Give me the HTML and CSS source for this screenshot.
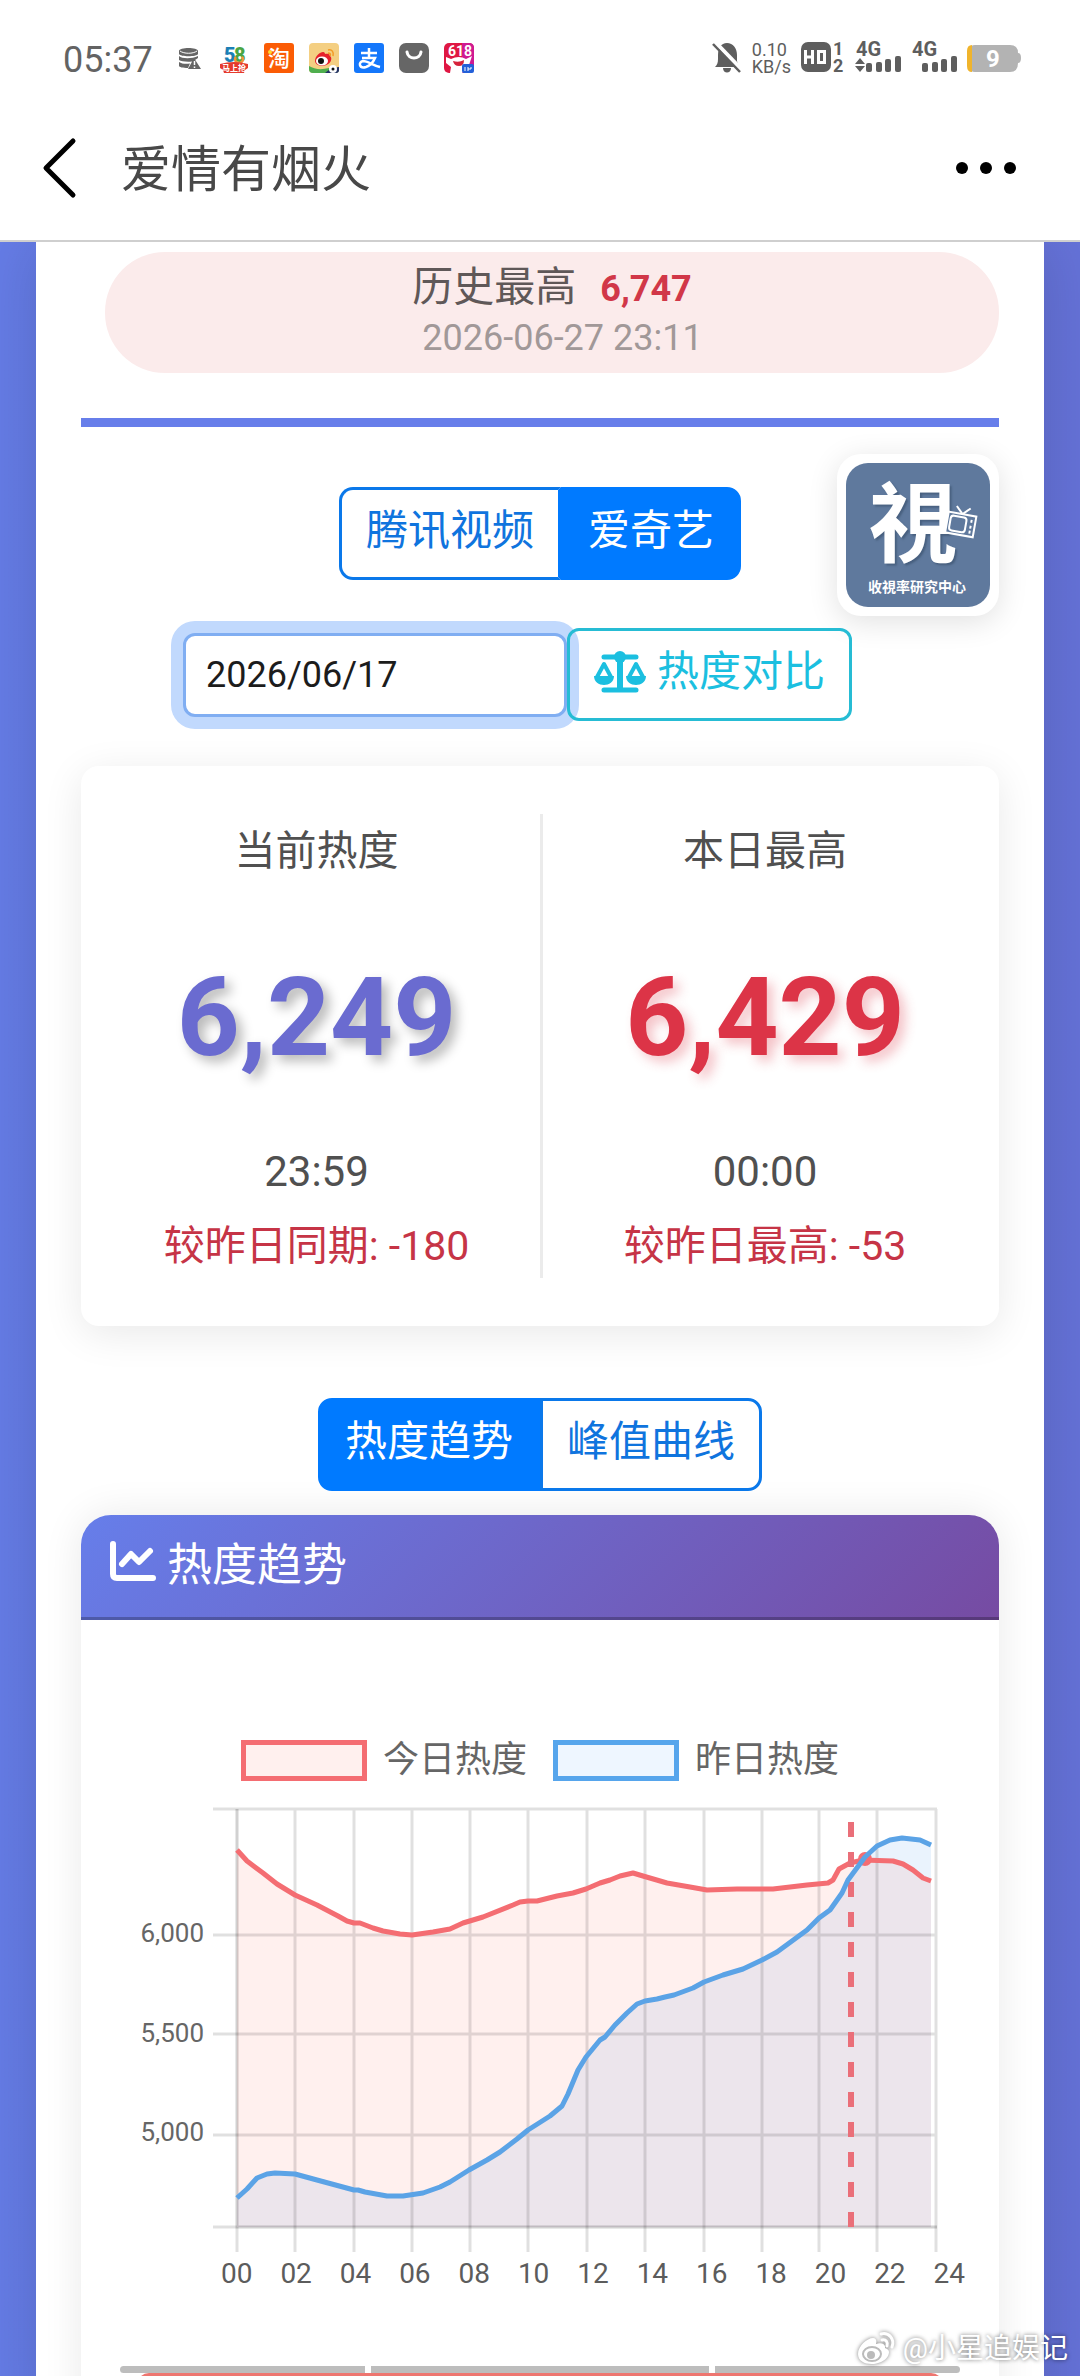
FILE: index.html
```html
<!DOCTYPE html>
<html lang="zh-CN">
<head>
<meta charset="utf-8">
<meta name="viewport" content="width=device-width, initial-scale=1">
<title>爱情有烟火</title>
<link rel="stylesheet" href="styles.css">
</head>
<body>
<div class="app">
  <div class="status">
    <time class="status-time">05:37</time>
    <div class="status-apps">
      <svg width="30" height="30" viewBox="0 0 30 30" aria-hidden="true">
        <path fill="#666" d="M5 8c0-4 19-4 19 0v3c-1 3-18 3-19 0zM5 13c3 3 13 3 19 0v2l-3 2-3 1.500c-5 .5-11 0-13-1.500zM5 19c3 2 7 2 11 1.500l-2 4.500c-5 0-9-1-9-2zM20 15l7 11H14z"/>
        <path d="M6 8c4 3 13 3 17 0" fill="none" stroke="#fff"/>
        <path d="M20.500 18v4m0 1.500v1.500" stroke="#fff" stroke-width="1.500"/>
      </svg>
      <svg width="30" height="30" viewBox="0 0 30 30" aria-hidden="true">
        <text x="5" y="19" class="t58" fill="#1b7fb5">5</text><text x="15" y="19" class="t58" fill="#4aa544">8</text>
        <path d="M17 14a4 3.500 0 1 0 6 0" fill="none" stroke="#f0953a" stroke-width="2.500"/>
        <path d="M1 21q14-4 28 0v4l-3 2-1 3H5l-1-3-3-2z" fill="#e53a2d"/>
        <text x="3" y="28" class="t8" fill="#fff">马上抢</text>
      </svg>
      <svg width="30" height="30" viewBox="0 0 30 30" aria-hidden="true">
        <rect width="30" height="30" rx="3" fill="#fb5c05"/><circle cx="6" cy="9" r="2" fill="#ffd92e"/>
        <text x="4" y="23" class="t22" fill="#fff">淘</text>
      </svg>
      <svg width="30" height="30" viewBox="0 0 30 30" aria-hidden="true">
        <rect width="30" height="30" rx="4" fill="#f4cf82"/>
        <path d="M0 23q8 5 20 2l10 1q0 4-4 4H4q-4 0-4-4z" fill="#4fae4e"/><path d="M16 30q6-6 14-6v3q0 3-3 3z" fill="#243266"/>
        <path d="M6 18c0-5 5-9 8-9 2 0 2 2 2 2s5-1 5 2c3 2 1 9-7 10-4 0-8-2-8-5z" fill="#e6202b"/>
        <ellipse cx="13" cy="18" rx="6" ry="4.500" fill="#fff"/><circle cx="12" cy="18" r="3" fill="#111"/>
        <path d="M19 7c4-1 6 2 5 6M19 10c2 0 3 1 2 3" fill="none" stroke="#f39a24" stroke-width="1.500"/>
        <circle cx="24" cy="26" r="4" fill="#fff"/><circle cx="24" cy="26" r="1.500" fill="#111"/>
      </svg>
      <svg width="30" height="30" viewBox="0 0 30 30" aria-hidden="true">
        <rect width="30" height="30" rx="3" fill="#1477fb"/>
        <path d="M7 10h16M15 5v10M8 15h13q-3 7-9 9c-7 2-8-5-3-6 5 0 9 4 17 6" fill="none" stroke="#fff" stroke-width="2.500"/>
      </svg>
      <svg width="30" height="30" viewBox="0 0 30 30" aria-hidden="true">
        <rect width="30" height="30" rx="7" fill="#666"/>
        <path d="M8 9c1 8 13 8 14 0" fill="none" stroke="#fff" stroke-width="3" stroke-linecap="round"/>
      </svg>
      <svg width="30" height="30" viewBox="0 0 30 30" aria-hidden="true">
        <rect width="30" height="30" rx="5" fill="#df1743"/><path d="M18 0h7q5 0 5 5v20q0 5-5 5h-7z" fill="#cf1a92"/>
        <path d="M2 14l5 2q8-4 15 0l6-3-3 9-7 8H6l1-6-5-4z" fill="#fff"/>
        <path d="M9 18q6 2 11-1 0 6-5 6t-6-5z" fill="#d6233b"/>
        <text x="4" y="13" class="t14" fill="#fff">618</text>
        <rect x="18" y="21" width="12" height="9" rx="2" fill="#2360d9"/><path d="M21 24v4m3-4v4m0-2h3v-2" stroke="#fff" fill="none"/>
      </svg>
    </div>
    <div class="status-net">
      <svg width="30" height="32" viewBox="0 0 30 32" aria-hidden="true">
        <path d="M3 26c2-2 3-4 3-8v-4C6 7 9 2 15 2s10 5 10 12v6l2 6zM11 27h8c0 6-8 6-8 0z" fill="#5e5e5e"/>
        <path d="M3 1l27 28" stroke="#fff" stroke-width="4"/><path d="M1 3l27 28" stroke="#5e5e5e" stroke-width="2.500"/>
      </svg>
      <div class="speed"><span>0.10</span><span>KB/s</span></div>
      <svg width="44" height="32" viewBox="0 0 44 32" aria-hidden="true">
        <rect y="1" width="30" height="30" rx="7" fill="#5e5e5e"/>
        <path d="M4.500 9v14M11.500 9v14M4.500 16h7M17.500 10.500h6v11h-6z" fill="none" stroke="#fff" stroke-width="3"/>
        <text x="32" y="14" class="t18" fill="#5e5e5e">1</text><text x="32" y="31" class="t18" fill="#5e5e5e">2</text>
      </svg>
      <svg width="46" height="32" viewBox="0 0 46 32" aria-hidden="true">
        <text x="1" y="15" class="t20" fill="#5e5e5e">4G</text>
        <path d="M0 23l5-6 5 6zM0 25l5 6 5-6z" fill="#5e5e5e"/>
        <g fill="#5e5e5e"><rect x="11" y="22" width="6" height="9" rx="2"/><rect x="21" y="21" width="6" height="10" rx="2"/><rect x="30" y="18" width="6" height="13" rx="2"/><rect x="40" y="15" width="6" height="16" rx="2"/></g>
      </svg>
      <svg width="46" height="32" viewBox="0 0 46 32" aria-hidden="true">
        <text x="1" y="15" class="t20" fill="#5e5e5e">4G</text>
        <g fill="#5e5e5e"><rect x="11" y="22" width="6" height="9" rx="2"/><rect x="21" y="21" width="6" height="10" rx="2"/><rect x="30" y="18" width="6" height="13" rx="2"/><rect x="40" y="15" width="6" height="16" rx="2"/></g>
      </svg>
      <svg width="54" height="32" viewBox="0 0 54 32" aria-hidden="true">
        <path d="M8 4h35q8 0 8 8 3 0 3 5t-3 5q0 9-8 9H8q-5 0-5-5V9q0-5 5-5z" fill="#b3b3b3"/>
        <path d="M5 4v27q-5 0-5-6V10q0-6 5-6z" fill="#f0b42c"/>
        <text x="19" y="26" class="t24" fill="#fff">9</text>
      </svg>
    </div>
  </div>

  <header class="bar">
    <button class="icon-btn" aria-label="返回">
      <svg width="34" height="64" viewBox="0 0 34 64"><path d="M31 5L4 32l27 27" fill="none" stroke="#000" stroke-width="5" stroke-linecap="round" stroke-linejoin="round"/></svg>
    </button>
    <h1 class="bar-title">爱情有烟火</h1>
    <button class="icon-btn" aria-label="更多">
      <svg width="60" height="12" viewBox="0 0 60 12"><circle cx="6" cy="6" r="6"/><circle cx="30" cy="6" r="6"/><circle cx="54" cy="6" r="6"/></svg>
    </button>
  </header>

  <main class="scroll">
    <div class="panel">
      <section class="record">
        <p class="record-line">历史最高<strong class="record-value">6,747</strong></p>
        <p class="record-date">2026-06-27 23:11</p>
      </section>
      <hr class="rule">

      <section class="platforms">
        <div class="group">
          <button class="tab">腾讯视频</button>
          <button class="tab tab-on">爱奇艺</button>
        </div>
        <a class="logo" href="#" aria-label="收視率研究中心">
          <svg width="144" height="144" viewBox="0 0 144 144">
            <rect width="144" height="144" rx="22" fill="#5f799d"/>
            <text x="23" y="92" class="logo-glyph">視</text>
            <g transform="rotate(10 115 60)" fill="#5f799d" stroke="#fff" stroke-width="2">
              <path d="M108 44l7 7 7-7" fill="none"/>
              <rect x="101" y="51" width="28" height="21"/>
              <rect x="104" y="54" width="16" height="15" rx="3"/>
              <path d="M125 55v3m0 3v3m0 2v3"/>
            </g>
            <text x="22" y="129" class="logo-name">收視率研究中心</text>
          </svg>
        </a>
      </section>

      <form class="picker">
        <input class="date" type="text" value="2026/06/17" aria-label="日期">
        <button class="compare" type="button">
          <svg width="52" height="42" viewBox="0 0 52 42" aria-hidden="true">
            <g fill="none" stroke="#1bbfe0" stroke-linecap="round" stroke-linejoin="round">
              <path d="M10 6h32M10 39h32" stroke-width="5"/><path d="M26 6v32" stroke-width="6" stroke-linecap="butt"/>
              <path d="M3 26l7-13 7 13M35 26l7-13 7 13" stroke-width="4"/>
            </g>
            <circle cx="26" cy="6" r="6" fill="#1bbfe0"/>
            <path d="M0 25h20c0 12-20 12-20 0zM32 25h20c0 12-20 12-20 0z" fill="#1bbfe0"/>
          </svg>
          热度对比
        </button>
      </form>

      <section class="stats">
        <div class="stat">
          <h2 class="stat-label">当前热度</h2>
          <p class="stat-num stat-now">6,249</p>
          <p class="stat-time">23:59</p>
          <p class="stat-diff">较昨日同期: -180</p>
        </div>
        <div class="stat">
          <h2 class="stat-label">本日最高</h2>
          <p class="stat-num stat-max">6,429</p>
          <p class="stat-time">00:00</p>
          <p class="stat-diff">较昨日最高: -53</p>
        </div>
      </section>

      <div class="group group-chart">
        <button class="tab tab-on">热度趋势</button>
        <button class="tab">峰值曲线</button>
      </div>

      <section class="trend">
        <h2 class="trend-head">
          <svg width="46" height="40" viewBox="0 0 46 40" aria-hidden="true">
            <path d="M3 3v30q0 4 4 4h36" fill="none" stroke="#fff" stroke-width="6" stroke-linecap="round"/>
            <path d="M12 23l9-10 8 8 11-11" fill="none" stroke="#fff" stroke-width="6" stroke-linecap="round" stroke-linejoin="round"/>
          </svg>
          热度趋势
        </h2>
        <div class="trend-body">
          <ul class="legend">
            <li class="legend-item"><span class="swatch swatch-today"></span>今日热度</li>
            <li class="legend-item"><span class="swatch swatch-yesterday"></span>昨日热度</li>
          </ul>
          <svg class="chart" viewBox="0 0 840 452" role="img" aria-label="热度趋势">
            <path class="area-blue" d="M117 398L127 389 137 378 147 374 155 373 175 374 197 380 234 390 238 390 245 392 267 396 283 396 303 393 320 387 330 382 349 370 367 360 380 352 397 339 408 330 430 316 442 306 448 294 458 270 466 257 480 240 485 237 495 225 507 213 517 204 525 201 537 199 545 197 554 195 573 188 584 182 603 175 623 169 642 160 657 152 687 130 699 118 710 110 722 93 728 80 745 57 757 46 770 40 782 38 800 40 811 45V427H117z"/>
            <path class="area-red" d="M117 50L127 61 143 73 157 84 175 95 197 105 218 116 227 121 234 123 240 123 253 128 263 131 280 134 292 135 313 132 330 129 343 123 363 117 393 105 400 102 408 101 417 101 437 96 453 93 466 89 480 83 490 80 500 76 513 73 523 76 547 83 570 87 587 90 617 89 653 89 687 85 708 83 713 80 719 69 730 63 743 60 773 61 783 64 793 70 803 78 811 81V427H117z"/>
            <path class="grid" d="M93 9H817M93 135H817M93 234H817M93 335H817M93 427H117M175 9V452M234 9V452M292 9V452M350 9V452M408 9V452M467 9V452M525 9V452M584 9V452M642 9V452M699 9V452M757 9V452M816 9V452M117 427V452"/>
            <path class="axis" d="M117 9V427H817"/>
            <path class="line line-red" d="M117 50L127 61 143 73 157 84 175 95 197 105 218 116 227 121 234 123 240 123 253 128 263 131 280 134 292 135 313 132 330 129 343 123 363 117 393 105 400 102 408 101 417 101 437 96 453 93 466 89 480 83 490 80 500 76 513 73 523 76 547 83 570 87 587 90 617 89 653 89 687 85 708 83 713 80 719 69 730 63 743 60 773 61 783 64 793 70 803 78 811 81"/>
            <circle cx="745" cy="59" r="7" fill="#f46d72"/>
            <path class="marker" d="M731 22V427"/>
            <path class="line line-blue" d="M117 398L127 389 137 378 147 374 155 373 175 374 197 380 234 390 238 390 245 392 267 396 283 396 303 393 320 387 330 382 349 370 367 360 380 352 397 339 408 330 430 316 442 306 448 294 458 270 466 257 480 240 485 237 495 225 507 213 517 204 525 201 537 199 545 197 554 195 573 188 584 182 603 175 623 169 642 160 657 152 687 130 699 118 710 110 722 93 728 80 745 57 757 46 770 40 782 38 800 40 811 45"/>
            <g class="ticks"><text x="84" y="142">6,000</text><text x="84" y="242">5,500</text><text x="84" y="341">5,000</text></g>
          </svg>
          <div class="hours">
            <span>00</span><span>02</span><span>04</span><span>06</span><span>08</span><span>10</span><span>12</span><span>14</span><span>16</span><span>18</span><span>20</span><span>22</span><span>24</span>
          </div>
          <div class="segments"><span class="seg"></span><span class="seg seg-mid"></span><span class="seg"></span></div>
          <div class="banner"></div>
        </div>
      </section>
    </div>
  </main>

  <div class="watermark">
    <svg width="40" height="34" viewBox="0 0 40 34" aria-hidden="true">
      <path d="M2 22C2 14 11 6 17 6c3 0 4 3 3 6 5-2 10 0 9 4 4 1 5 4 3 8-6 11-30 11-30-2z" fill="#fff"/>
      <ellipse cx="16" cy="22" rx="9" ry="7" fill="none" stroke="#bbb" stroke-width="2"/><circle cx="15" cy="23" r="4" fill="#bbb"/>
      <path d="M25 2c8-2 14 5 11 13M26 8c4-1 6 2 5 6" fill="none" stroke="#fff" stroke-width="3" stroke-linecap="round"/>
    </svg>
    <span>@小星追娱记</span>
  </div>
</div>
</body>
</html>
```
FILE: styles.css
```css
* { box-sizing: border-box; }

body, h1, h2, p, ul { margin: 0; padding: 0; }

body {
  font-family: Roboto, "Noto Sans CJK SC", sans-serif;
  color: #505050;
  background: #fff;
}

button, input { font: inherit; margin: 0; }
svg { display: block; flex: none; overflow: visible; }

.app {
  position: relative;
  display: flex;
  flex-direction: column;
  height: 100vh;
  overflow: hidden;
}

/* Status bar */
.status {
  display: flex;
  align-items: center;
  height: 116px;
  padding: 0 59px 0 63px;
}
.status-time { font-size: 36px; color: #636363; margin-right: 21px; line-height: 42px; padding-top: 4px; }
.status-apps { display: flex; gap: 15px; }
.status-net { display: flex; gap: 10px; margin-left: auto; }
.speed { display: flex; flex-direction: column; font-size: 18px; line-height: 17px; color: #5e5e5e; }
.t8 { font-size: 8px; font-weight: 700; }
.t14 { font-size: 14px; font-weight: 700; }
.t18 { font-size: 18px; font-weight: 700; }
.t20 { font-size: 20px; font-weight: 700; }
.t22 { font-size: 22px; font-weight: 500; }
.t24 { font-size: 24px; font-weight: 700; }
.t58 { font-size: 20px; font-weight: 900; }

/* Title bar */
.bar {
  display: flex;
  align-items: center;
  height: 126px;
  padding: 0 64px 20px 42px;
  border-bottom: 2px solid #cfcfcf;
}
.icon-btn { display: flex; padding: 0; border: 0; background: none; }
.bar-title { flex: 1; margin-left: 45px; padding-top: 4px; font-size: 50px; line-height: 60px; font-weight: 400; color: #484848; }

/* Page */
.scroll {
  flex: 1;
  min-height: 0;
  overflow: hidden;
  padding: 0 36px;
  background: linear-gradient(90deg, #657ce6, #6572d8);
}
.panel {
  min-height: 100%;
  padding: 10px 45px 0;
  background: #fff;
  box-shadow: 0 0 60px rgba(0, 0, 0, 0.15);
}

.record {
  margin-left: 24px;
  padding: 10px 0 9px;
  border-radius: 60px;
  background: #fbebeb;
  text-align: center;
}
.record-line {
  display: flex;
  align-items: baseline;
  justify-content: center;
  gap: 24px;
  height: 51px;
  font-size: 41px;
  line-height: 51px;
  color: #5f5858;
}
.record-value { font-size: 36px; font-weight: 700; color: #d13748; }
.record-date { padding-left: 21px; font-size: 36px; line-height: 51px; color: #a19898; }

.rule { height: 9px; margin: 45px 0 60px; border: 0; background: #677eea; }

.platforms { position: relative; }
.group { display: flex; justify-content: center; }
.tab {
  height: 93px;
  padding: 0 24px 6px;
  border: 3px solid #0a78ea;
  background: #fff;
  color: #0f74de;
  font-size: 42px;
  line-height: 60px;
}
.tab:first-child { border-radius: 14px 0 0 14px; }
.tab:last-child { border-radius: 0 14px 14px 0; }
.tab-on { background: #007aff; border-color: #007aff; color: #fff; }
.tab:not(.tab-on):first-child { border-right-color: #007aff; }

.logo {
  position: absolute;
  top: -33px;
  right: 0;
  padding: 9px;
  border-radius: 24px;
  background: #fff;
  box-shadow: 0 6px 30px rgba(0, 0, 0, 0.12);
}
.logo-glyph {
  font: 700 88px "Noto Sans CJK TC", sans-serif;
  fill: #fff;
  text-shadow: 2px 2px 2px #48607f;
}
.logo-name { font: 700 14px "Noto Sans CJK TC", sans-serif; fill: #fff; }

.picker {
  display: flex;
  align-items: center;
  justify-content: center;
  margin: 48px 0 45px;
  padding-right: 45px;
}
.date {
  width: 384px;
  height: 84px;
  padding: 0 20px;
  border: 3px solid #80aef2;
  border-radius: 12px;
  outline: 0;
  background: #fff;
  box-shadow: 0 0 0 12px #c1d9fd;
  color: #1c1c1c;
  font-size: 36px;
}
.compare {
  position: relative;
  display: flex;
  align-items: center;
  gap: 11px;
  height: 93px;
  padding: 0 24px 6px;
  border: 3px solid #26bcd4;
  border-radius: 12px;
  background: none;
  color: #1bbfe0;
  font-size: 42px;
  line-height: 60px;
}

.stats {
  display: grid;
  grid-template-columns: 1fr 1fr;
  padding: 48px 12px;
  border-radius: 18px;
  background: #fff;
  box-shadow: 0 8px 40px rgba(0, 0, 0, 0.09);
  text-align: center;
}
.stat + .stat { border-left: 3px solid #ebebeb; }
.stat-label { font-size: 41px; font-weight: 400; line-height: 74px; }
.stat-num { font-size: 110px; font-weight: 700; line-height: 260px; }
.stat-now { color: #6a6bd0; text-shadow: 6px 6px 12px rgba(0, 0, 0, 0.28); }
.stat-max { color: #dc3447; text-shadow: 6px 6px 12px rgba(220, 53, 69, 0.3); }
.stat-time { font-size: 42px; line-height: 48px; }
.stat-diff { margin-top: 18px; font-size: 41px; line-height: 64px; color: #c63446; }

.group-chart { margin: 72px 0 24px; }

.trend {
  border-radius: 30px 30px 0 0;
  background: #fff;
  box-shadow: 0 0 40px rgba(0, 0, 0, 0.09);
}
.trend-head {
  display: flex;
  align-items: center;
  gap: 11px;
  height: 105px;
  padding: 0 29px 10px;
  border-bottom: 3px solid rgba(0, 0, 0, 0.25);
  border-radius: 30px 30px 0 0;
  background: linear-gradient(135deg, #667eea, #764ba2) border-box;
  color: #fff;
  font-size: 45px;
  font-weight: 400;
}
.trend-body { padding: 120px 39px 0; }

.legend {
  display: flex;
  justify-content: center;
  gap: 26px;
  list-style: none;
  font-size: 36px;
  line-height: 41px;
  color: #666;
}
.legend-item { display: flex; align-items: center; gap: 16px; }
.swatch { width: 126px; height: 41px; border: 5px solid; }
.swatch-today { border-color: #f46d72; background: #fff0ee; }
.swatch-yesterday { border-color: #56a5ec; background: #eef6ff; }

.chart { width: 100%; margin-top: 19px; }
.area-blue { fill: rgba(84, 160, 235, 0.12); }
.area-red { fill: rgba(255, 107, 90, 0.1); }
.grid { fill: none; stroke: rgba(0, 0, 0, 0.12); stroke-width: 3; }
.axis { fill: none; stroke: rgba(0, 0, 0, 0.18); stroke-width: 3; }
.line { fill: none; stroke-width: 5; stroke-linejoin: round; }
.line-red { stroke: #f46d72; }
.line-blue { stroke: #5ba3e6; }
.marker { stroke: #ea6f79; stroke-width: 6; stroke-dasharray: 15 15; }
.ticks { font-size: 26px; fill: #666; text-anchor: end; }

.hours {
  display: flex;
  justify-content: space-between;
  margin-top: 8px;
  padding-left: 101px;
  margin-right: -5px;
  font-size: 28px;
  line-height: 28px;
  color: #5c5c5c;
}

.segments { display: flex; gap: 6px; margin-top: 78px; border-radius: 4px; overflow: hidden; }
.seg { flex: 8; height: 7px; background: #bdbdbd; }
.seg-mid { flex: 11; }
.banner { height: 60px; margin: 0 17px; border-radius: 12px; background: #ee7670; }

.watermark {
  position: absolute;
  right: 12px;
  bottom: 10px;
  display: flex;
  align-items: center;
  gap: 7px;
  color: #fff;
  font-size: 28px;
  line-height: 34px;
  text-shadow: 0 0 4px rgba(0, 0, 0, 0.6);
}
.watermark svg { filter: drop-shadow(0 0 2px rgba(0, 0, 0, 0.5)); }
```
